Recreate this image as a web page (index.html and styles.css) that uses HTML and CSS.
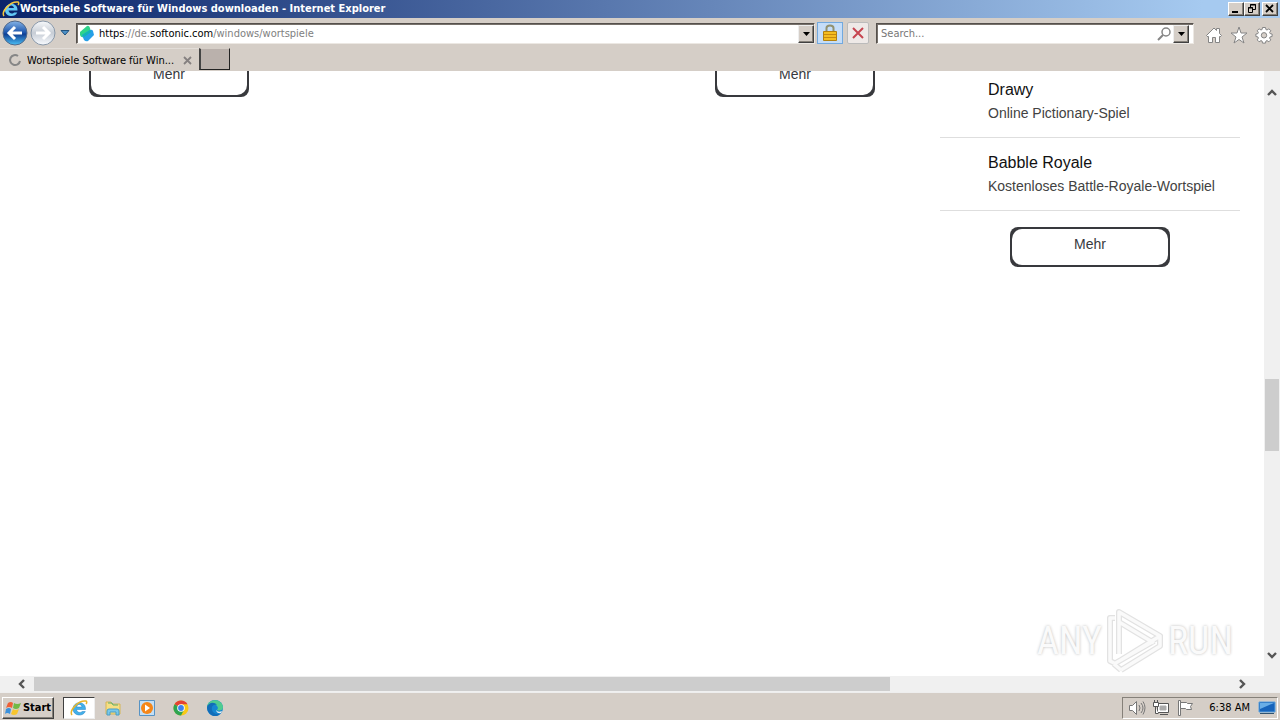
FILE: index.html
```html
<!DOCTYPE html>
<html lang="de">
<head>
<meta charset="utf-8">
<title>Wortspiele Software für Windows downloaden</title>
<link rel="stylesheet" href="styles.css">
</head>
<body>
<div class="desktop">
  <header class="titlebar">
    <svg class="ie-logo" width="18" height="18" viewBox="0 0 18 18"><path d="M15.500 10.500H6.500C7 14 11 14 12 12.500H15.300C13 18 3 17 3 10C3 2 16 1 15.500 10.500M6.600 8H12C11.500 4.500 7 4.500 6.600 8" fill="#62c8f5" fill-rule="evenodd"/><path d="M2 16C-1 12 8 1 16 2C17 2.500 17 4 16 5" fill="none" stroke="#f5c63c" stroke-width="1.500"/></svg>
    <h1 class="title">Wortspiele Software für Windows downloaden - Internet Explorer</h1>
    <div class="window-buttons">
      <button class="win-btn" aria-label="Minimize"><svg width="14" height="12"><path d="M3 8h6v2H3z"/></svg></button>
      <button class="win-btn" aria-label="Restore"><svg width="14" height="12" fill="none" stroke="#000"><path d="M5.500 4V1.500h5v5H8M5 2h6M3.500 4.500h4v5h-4zM3 5h5"/></svg></button>
      <button class="win-btn close" aria-label="Close"><svg width="14" height="12" stroke="#000" stroke-width="1.800"><path d="M3 2l7 7M10 2L3 9"/></svg></button>
    </div>
  </header>

  <nav class="navbar">
    <div class="history">
      <button class="plain" aria-label="Back"><svg width="26" height="26" viewBox="0 0 26 26"><defs><linearGradient id="blue" x2="0" y2="1"><stop stop-color="#85b4e7"/><stop offset=".48" stop-color="#1d55ac"/><stop offset=".55" stop-color="#103f93"/><stop offset="1" stop-color="#4bc1f7"/></linearGradient></defs><circle cx="13" cy="13" r="12" fill="url(#blue)" stroke="#52698a"/><path d="M20 13H7M13 7l-6 6 6 6" fill="none" stroke="#fff" stroke-width="3"/></svg></button>
      <button class="plain" aria-label="Forward"><svg width="26" height="26" viewBox="0 0 26 26"><defs><linearGradient id="silver" x2="0" y2="1"><stop stop-color="#f7f9fb"/><stop offset=".5" stop-color="#c7cdd5"/><stop offset="1" stop-color="#f8fbff"/></linearGradient></defs><circle cx="13" cy="13" r="12" fill="url(#silver)" stroke="#8998a9"/><path d="M6 13h13M13 7l6 6-6 6" fill="none" stroke="#fff" stroke-width="3"/></svg></button>
      <button class="plain" aria-label="Recent pages"><svg width="10" height="8"><path d="M1 1.500h8L5 6z" fill="#4d91c7" stroke="#22527d"/></svg></button>
    </div>
    <div class="field address">
      <svg width="18" height="18" viewBox="0 0 18 18"><path d="M2 7L9 1q2-1 3 2l1 4-7 5q-3 1-4-2z" fill="#2fd48b"/><path d="M4 10l8-5q2-1 3 1l1 4-6 6q-2 1-4-1z" fill="#269fe7"/><path d="M4 10l8-5 1 2-7 5z" fill="#12b5b5"/></svg>
      <span class="url"><b>https</b>://de.<b>softonic.com</b>/windows/wortspiele</span>
      <button class="drop" aria-label="Show addresses"><svg width="7" height="4"><path d="M0 0h7L3.500 4z"/></svg></button>
    </div>
    <button class="tool lock" aria-label="Security report"><svg width="16" height="18" viewBox="0 0 16 18"><path d="M4.500 8V4q0-2.500 3.500-2.500T11.500 4v4" fill="none" stroke="#92916f" stroke-width="2"/><path d="M1.500 7.500h13v9h-13z" fill="#f4bd20" stroke="#b28110"/><path d="M2 10.500h12M2 13.500h12" stroke="#c7890e"/></svg></button>
    <button class="tool stop" aria-label="Stop"><svg width="14" height="14"><path d="M2 2l10 10M12 2L2 12" stroke="#c64550" stroke-width="2"/></svg></button>
    <div class="field search">
      <input class="search-input" type="text" placeholder="Search..." aria-label="Search">
      <svg width="15" height="15" fill="none" stroke="#858585"><circle cx="9" cy="6" r="4" stroke-width="1.500"/><path d="M6 9l-5 5" stroke-width="2"/></svg>
      <button class="drop" aria-label="Search providers"><svg width="7" height="4"><path d="M0 0h7L3.500 4z"/></svg></button>
    </div>
    <div class="commands">
      <button class="plain" aria-label="Home"><svg width="18" height="18" viewBox="0 0 18 18" fill="#fff" stroke="#858585"><path d="M1.500 9.500L9 2l2.500 2.500v-2h3v5l2 2-1.500 1.500-.500-.500v6h-4v-5h-3v5h-4v-6L3 11z"/></svg></button>
      <button class="plain" aria-label="Favorites"><svg width="18" height="18" viewBox="0 0 18 18" fill="#fff" stroke="#858585"><path d="M9 1l2 6h6l-5 4 2 6-5-3.500L4 17l2-6-5-4h6z"/></svg></button>
      <button class="plain" aria-label="Tools"><svg width="18" height="18" viewBox="0 0 18 18" fill="#fff" stroke="#858585"><path d="M7.500 1.500h3l.4 2 1.100.5 1.900-1.200 1.900 1.900L14.600 6.500l.5 1.100 2 .4v2.500l-2 .4-.5 1.200 1.200 1.800-1.900 1.900-1.900-1.200-1.100.5-.4 2h-3l-.4-2-1.100-.5-1.900 1.200-1.900-1.900 1.200-1.800-.5-1.200-2-.4V8l2-.4.5-1.100-1.200-1.800 1.900-1.900L6 4l1.100-.5z"/><circle cx="9" cy="9.300" r="2.700" fill="#d6cfc8"/></svg></button>
    </div>
  </nav>

  <div class="tabs">
    <div class="tab">
      <svg width="14" height="14"><path d="M10 3A5 5 0 1 0 12 8" fill="none" stroke="#868686" stroke-width="2"/></svg>
      <span class="tab-title">Wortspiele Software für Win...</span>
      <button class="plain" aria-label="Close tab"><svg width="9" height="9"><path d="M1 1l7 7M8 1L1 8" stroke="#858080" stroke-width="1.800"/></svg></button>
    </div>
    <button class="new-tab" aria-label="New tab"></button>
  </div>

  <div class="browser">
    <main class="page">
      <button class="more clipped"><span>Mehr</span></button>
      <button class="more clipped second"><span>Mehr</span></button>
      <aside class="sidebar">
        <article class="app"><h2>Drawy</h2><p>Online Pictionary-Spiel</p></article>
        <article class="app"><h2>Babble Royale</h2><p>Kostenloses Battle-Royale-Wortspiel</p></article>
        <button class="more"><span>Mehr</span></button>
      </aside>
      <div class="watermark">
        <span>ANY</span>
        <svg width="58" height="66" viewBox="0 0 58 66" fill="none" stroke-linejoin="round"><g stroke="#e2e2e2" stroke-width="6"><path d="M13 46V4L54 28 15 52M13 14L48 35M9 10H4v43l4 2M8 56L48 33M15 62L54 38V28M8 56l7 6"/></g><g stroke="#fafafa" stroke-width="3.500"><path d="M13 46V4L54 28 15 52M13 14L48 35M9 10H4v43l4 2M8 56L48 33M15 62L54 38V28M8 56l7 6"/></g></svg>
        <span>RUN</span>
      </div>
    </main>
    <div class="vscroll">
      <svg width="12" height="10"><path d="M2 7l4-4 4 4" fill="none" stroke="#555" stroke-width="2.400"/></svg>
      <div class="vthumb-track"><div class="vthumb"></div></div>
      <svg width="12" height="10"><path d="M2 3l4 4 4-4" fill="none" stroke="#555" stroke-width="2.400"/></svg>
    </div>
    <div class="hscroll">
      <svg width="10" height="12"><path d="M8 2L4 6l4 4" fill="none" stroke="#555" stroke-width="2.400"/></svg>
      <div class="htrack"><div class="hthumb"></div></div>
      <svg width="10" height="12"><path d="M3 2l4 4-4 4" fill="none" stroke="#555" stroke-width="2.400"/></svg>
    </div>
  </div>

  <footer class="taskbar">
    <button class="start"><svg width="17" height="16" viewBox="0 0 17 16"><path d="M3 3q3-2 5 0L7 8Q4 6 1 8z" fill="#ef6036"/><path d="M9 3q3 2 7 0l-2 5q-3 2-6 0z" fill="#72b944"/><path d="M1 9q3-2 5 0l-1 5q-3-2-5 0z" fill="#3b91dc"/><path d="M8 9q2 2 6 0l-2 5q-3 2-6 0z" fill="#f8c62f"/></svg>Start</button>
    <div class="apps">
      <button class="task active" aria-label="Internet Explorer"><svg width="18" height="18" viewBox="0 0 18 18"><path d="M15.500 10.500H6.500C7 14 11 14 12 12.500H15.300C13 18 3 17 3 10C3 2 16 1 15.500 10.500M6.600 8H12C11.500 4.500 7 4.500 6.600 8" fill="#42b0e9" stroke="#2380c4" stroke-width=".500" fill-rule="evenodd"/><path d="M2 16C-1 12 8 1 16 2C17 2.500 17 4 16 5" fill="none" stroke="#e8b52c" stroke-width="1.500"/></svg></button>
      <button class="task" aria-label="Explorer"><svg width="18" height="18" viewBox="0 0 18 18"><path d="M2 3h5l1 2h8v10H2z" fill="#f6df82" stroke="#d6b556"/><path d="M4 4h4l1 2h5" stroke="#5cae75" fill="none"/><path d="M3 16v-4q0-2 2-2h8q2 0 2 2v4h-3v-3H6v3z" fill="#79c8ea" stroke="#4a9dc6"/></svg></button>
      <button class="task" aria-label="Media Player"><svg width="18" height="18" viewBox="0 0 18 18"><path d="M1.500 1.500h15v15h-15z" fill="#c4dff5" stroke="#5793c4"/><circle cx="9" cy="9" r="6" fill="#f58618"/><path d="M7 5.500l5 3.500-5 3.500z" fill="#fff"/></svg></button>
      <button class="task" aria-label="Chrome"><svg width="18" height="18" viewBox="0 0 18 18"><circle cx="9" cy="9" r="7.500" fill="#f8c916"/><path d="M9 9L2.500 5.200A7.500 7.500 0 0 1 15.500 5.200H9z" fill="#e44234"/><path d="M9 9L2.500 5.200A7.500 7.500 0 0 0 9 16.500l3-5.500z" fill="#2ea451"/><circle cx="9" cy="9" r="3.800" fill="#fff"/><circle cx="9" cy="9" r="2.900" fill="#3d82ed"/></svg></button>
      <button class="task" aria-label="Edge"><svg width="18" height="18" viewBox="0 0 18 18"><circle cx="9" cy="9" r="8" fill="#1686d1"/><path d="M1 8C2-1 16-1 17 8c0 4-4 4-6 3l1-2C10 3 4 5 1 8" fill="#4fcc90"/><path d="M1 8C2 4 8 2 11 6 7 5 5 8 6 11c1 4 6 5 9 3-6 7-14 1-14-6" fill="#126db8"/><path d="M10 11q2 3 6 1l-1 2q-4 1-5-3" fill="#e6eff2"/></svg></button>
    </div>
    <div class="tray">
      <svg width="18" height="18" viewBox="0 0 18 18" fill="#fff" stroke="#777"><path d="M1.500 6.500h3l4-4v13l-4-4h-3z"/><path d="M11 6q2 3 0 6M13 4q4 5 0 10M15 2.500q4 6 0 13" fill="none"/></svg>
      <svg width="18" height="18" viewBox="0 0 18 18" fill="#fff" stroke="#555"><path d="M5.500 4.500h11v9h-11z"/><path d="M8 7h6v4H8z" fill="#aaa" stroke="#aaa"/><path d="M8 15.500h8M1.500 3.500h5v4h-5zM2.500 1v2M5.500 1v2M3.500 8v6.500h3"/></svg>
      <svg width="18" height="18" viewBox="0 0 18 18" fill="#fff" stroke="#777"><path d="M2.500 1.500h2v15h-2z"/><path d="M4.500 3.500h6l1 1h5l-2 3 1 3h-5l-1-1h-5z"/></svg>
      <time class="clock">6:38 AM</time>
      <svg width="18" height="14" viewBox="0 0 18 14"><path d="M1 1h16v10H1z" fill="#1764bb" stroke="#5aa0dc"/><path d="M2 2h14L2 8z" fill="#69aee7"/><path d="M2 12h14v1H2z" fill="#31536f"/></svg>
    </div>
  </footer>
</div>
</body>
</html>
```
FILE: styles.css
```css
* { box-sizing: border-box; }
body { margin: 0; font-family: "DejaVu Sans Condensed", "DejaVu Sans", sans-serif; font-size: 11px; color: #000; }
button { font: inherit; color: inherit; padding: 0; border: 0; background: none; display: flex; align-items: center; justify-content: center; }
svg { display: block; flex-shrink: 0; }
h1, h2, p { margin: 0; }
.desktop { height: 100vh; display: flex; flex-direction: column; background: #d5cec7; overflow: hidden; }

.titlebar { height: 18px; flex-shrink: 0; display: flex; align-items: center; padding: 0 2px; background: linear-gradient(90deg, #0a246a, #a6caf0 94%); color: #fff; }
.title { flex: 1; font-size: 11px; line-height: 16px; font-weight: bold; white-space: nowrap; }
.window-buttons { display: flex; }
.win-btn { width: 16px; height: 14px; background: #d5cec7; border: 1px solid; border-color: #fff #404040 #404040 #fff; box-shadow: inset -1px -1px #858079; }
.close { margin-left: 2px; }

.navbar { height: 30px; flex-shrink: 0; display: flex; align-items: center; padding: 0 7px 0 2px; }
.history { display: flex; align-items: center; gap: 2px; padding-right: 6px; }
.history .plain:last-child { margin-left: 2px; }
.field { height: 21px; display: flex; align-items: center; background: #fff; border: 1px solid; border-color: #55504c #ece8e3 #ece8e3 #55504c; box-shadow: inset 1px 1px #77716b; }
.address { flex: 1; padding: 1px 0 0 1px; }
.url { flex: 1; color: #808080; padding-left: 3px; line-height: 16px; }
.url b { font-weight: normal; color: #000; }
.drop { width: 16px; height: 18px; background: #d5cec7; border: 1px solid; border-color: #eee #404040 #404040 #eee; box-shadow: inset -1px -1px #858079; }
.tool { height: 22px; border: 1px solid #bbb; }
.lock { width: 26px; background: #c5ddf8; border-color: #72a9df; margin-left: 2px; }
.stop { width: 22px; margin-left: 4px; background: #eee9e7; border-radius: 2px; }
.search { width: 318px; margin-left: 7px; padding: 1px 4px 0 4px; }
.search-input { flex: 1; min-width: 0; border: 0; padding: 0; outline: 0; background: none; font: inherit; }
.search-input::placeholder { color: #777; opacity: 1; }
.search .drop { margin-left: 1px; }
.commands { display: flex; gap: 7px; padding: 4px 0 0 11px; }

.tabs { height: 23px; flex-shrink: 0; display: flex; }
.tab { width: 199px; display: flex; align-items: center; padding: 0 7px 0 8px; border-top: 1px solid #e2ddd8; }
.tab-title { flex: 1; padding-left: 5px; white-space: nowrap; }
.new-tab { width: 31px; height: 22px; background: #bab1ac; border: 1px solid; border-color: #d5cec7 #222 #222 #444; border-left-width: 2px; }

.browser { flex: 1; min-height: 0; display: grid; grid-template: minmax(0, 1fr) 16px / minmax(0, 1fr) 16px; }
.page { position: relative; overflow: hidden; background: #fff; display: flex; align-items: flex-start; padding: 0 24px 0 89px; font-family: "Liberation Sans", Arial, sans-serif; font-size: 14px; }
.more { width: 160px; height: 40px; padding: 2px; background: #38393d; border-radius: 8px; color: #38393d; align-items: stretch; flex-shrink: 0; }
.more span { flex: 1; background: #fff; border-radius: 10px; line-height: 30px; }
.clipped { margin-top: -14px; }
.second { margin-left: auto; margin-right: 65px; }
.sidebar { width: 300px; display: flex; flex-direction: column; align-items: center; }
.sidebar .more { margin-top: 16px; }
.app { width: 100%; padding: 13px 0 12px 48px; border-bottom: 1px solid #dedede; line-height: 24px; color: #424242; }
.app:first-child { padding-top: 7px; }
.app h2 { font-size: 16px; font-weight: normal; line-height: 23px; color: #111; }
.watermark { position: absolute; right: 31px; bottom: 2px; display: flex; align-items: center; gap: 4px; font: 38px "Roboto Condensed", Roboto, sans-serif; color: #fafafa; text-shadow: 0 0 3px #bbb; }

.vscroll { display: flex; flex-direction: column; align-items: center; background: #f0f0f0; padding: 17px 0 16px; }
.vthumb-track { flex: 1; display: grid; grid-template-rows: 281fr 72px 199fr; }
.vthumb { grid-row: 2; width: 14px; background: #cdcdcd; }
.hscroll { grid-column: 1 / -1; display: flex; align-items: center; background: #f0f0f0; padding: 0 33px 0 16px; }
.htrack { flex: 1; padding: 0 4px 0 8px; }
.hthumb { width: 71.4%; height: 14px; background: #cdcdcd; }

.taskbar { height: 28px; flex-shrink: 0; display: flex; align-items: center; padding: 2px 2px 0; border-top: 1px solid #eee; }
.start { width: 52px; height: 22px; gap: 1px; font-weight: bold; border: 1px solid; border-color: #fff #404040 #404040 #fff; box-shadow: inset -1px -1px #858079; }
.apps { flex: 1; display: flex; gap: 2px; padding-left: 9px; }
.task { width: 32px; height: 22px; }
.active { background: #fff; border: 1px solid; border-color: #404040 #eee #eee #404040; }
.tray { height: 22px; display: flex; align-items: center; gap: 6px; padding: 0 1px 0 5px; border: 1px solid; border-color: #858079 #fff #fff #858079; }
.clock { padding: 0 2px 0 9px; }
```
